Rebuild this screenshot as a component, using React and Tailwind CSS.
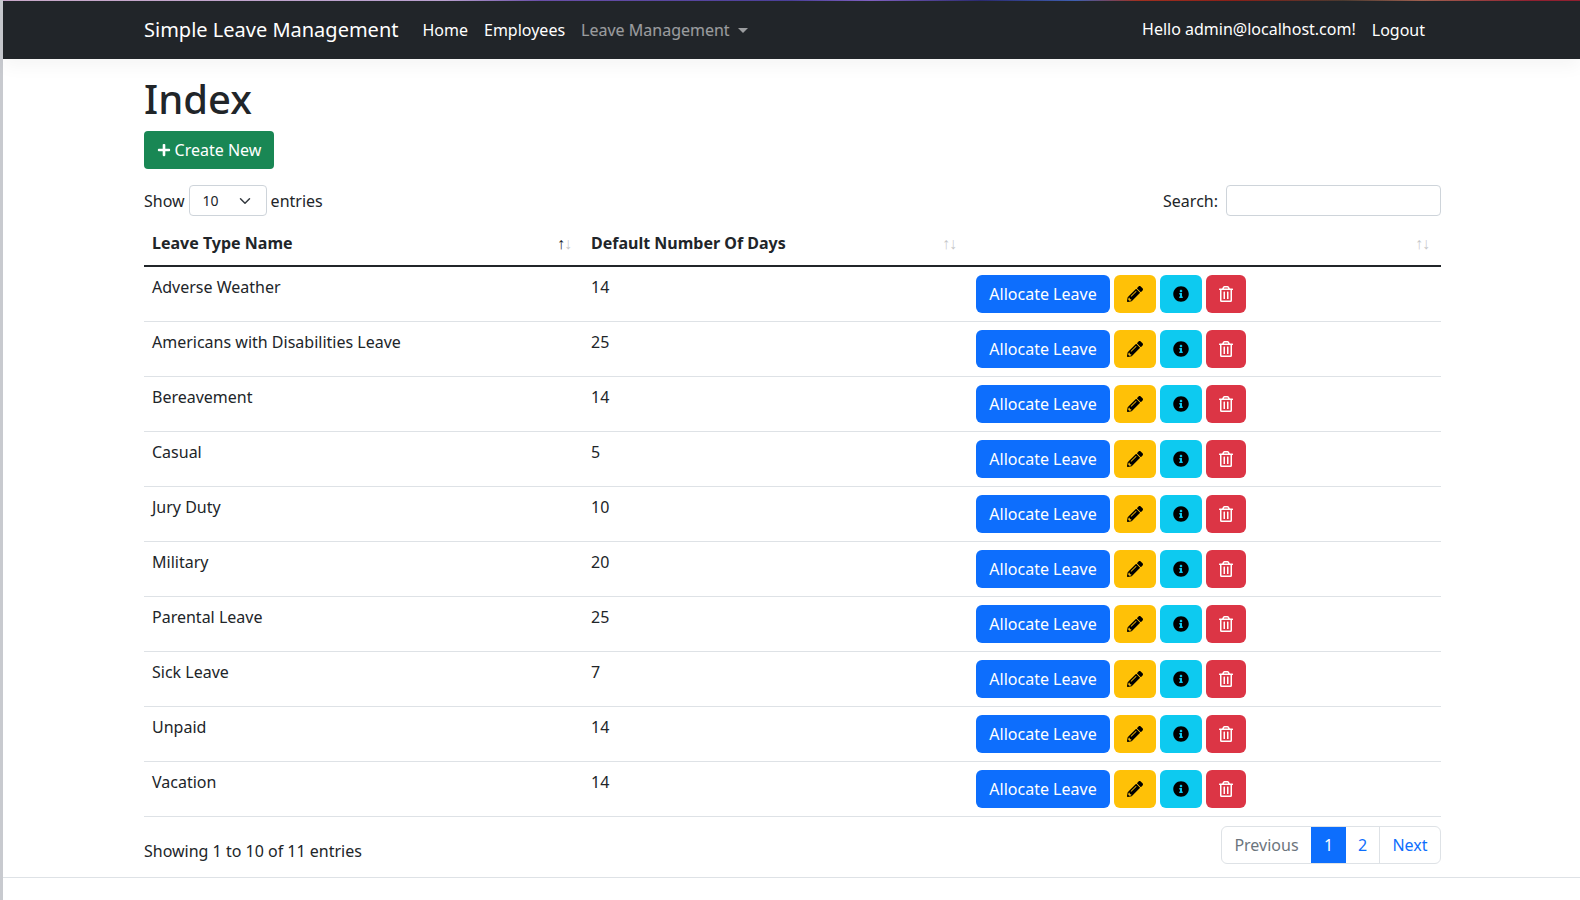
import React from 'react'
import { FaPencilAlt, FaInfoCircle, FaRegTrashAlt, FaPlus } from 'react-icons/fa'

const leaveTypes = [
  ['Adverse Weather', 14],
  ['Americans with Disabilities Leave', 25],
  ['Bereavement', 14],
  ['Casual', 5],
  ['Jury Duty', 10],
  ['Military', 20],
  ['Parental Leave', 25],
  ['Sick Leave', 7],
  ['Unpaid', 14],
  ['Vacation', 14],
]

const SortArrows = ({ active }) => (
  <span className="flex font-normal text-[#212529] text-[16px] leading-6 tracking-[-1px]">
    <span className={active ? 'opacity-100' : 'opacity-25'}>↑</span>
    <span className="opacity-25">↓</span>
  </span>
)

const ActionButtons = () => (
  <div className="flex gap-1">
    <button className="h-[38px] w-[134px] rounded-md bg-[#0d6efd] text-white">Allocate Leave</button>
    <button className="flex h-[38px] w-[42px] items-center justify-center rounded-md bg-[#ffc107] text-black">
      <FaPencilAlt className="h-4 w-4" />
    </button>
    <button className="flex h-[38px] w-[42px] items-center justify-center rounded-md bg-[#0dcaf0] text-black">
      <FaInfoCircle className="h-4 w-4" />
    </button>
    <button className="flex h-[38px] w-10 items-center justify-center rounded-md bg-[#dc3545] text-white">
      <FaRegTrashAlt className="h-4 w-[14px]" />
    </button>
  </div>
)

export default function App() {
  return (
    <div className="flex h-[900px] overflow-hidden bg-white font-['Noto_Sans',sans-serif] text-base text-[#212529]">
      <div className="w-[3px] shrink-0 bg-[#c8cacf]" />
      <div className="flex min-w-0 flex-1 flex-col">
        <header className="shadow-[0_8px_16px_rgba(0,0,0,0.04)]">
          <div className="h-px bg-[linear-gradient(90deg,#c9a9c9_0%,#b9a0cf_28%,#6a4fa8_34%,#4a3f98_50%,#8060c0_55%,#2a2a70_62%,#3f5fb0_68%,#a03020_72%,#8a2018_78%,#4a3a30_85%,#a06050_90%,#902030_97%)]" />
          <nav className="flex h-[58px] items-center bg-[#212529] pl-[141px] pr-[147px] text-white">
            <span className="mr-4 text-xl">Simple Leave Management</span>
            <div className="flex flex-1 items-center">
              <a className="px-2">Home</a>
              <a className="px-2">Employees</a>
              <a className="flex items-center px-2 text-white/55">
                Leave Management
                <span className="ml-2 border-x-[5px] border-t-[5px] border-x-transparent border-t-white/55" />
              </a>
            </div>
            <span className="mb-0.5 mr-2">Hello admin@localhost.com!</span>
            <a className="px-2">Logout</a>
          </nav>
        </header>

        <main className="ml-[141px] mr-[139px] flex-1">
          <h1 className="mt-4 text-[40px] font-medium leading-[48px]">Index</h1>
          <button className="mt-2 flex h-[38px] w-[130px] items-center justify-center rounded-[4px] bg-[#198754] text-white">
            <FaPlus className="mr-1 h-[14px] w-[14px]" />
            Create New
          </button>

          <div className="mt-4 flex items-center justify-between">
            <div className="flex items-center">
              <span>Show</span>
              <div className="mx-1 flex h-[31px] w-[78px] items-center justify-between rounded-[4px] border border-[#ced4da] pl-[13px] pr-[15px] text-sm">
                <span>10</span>
                <svg width="12" height="12" viewBox="0 0 16 16" fill="none" stroke="#343a40" strokeWidth="2" strokeLinecap="round" strokeLinejoin="round">
                  <path d="M2 5l6 6 6-6" />
                </svg>
              </div>
              <span>entries</span>
            </div>
            <div className="flex items-center">
              <span className="mr-2">Search:</span>
              <input className="h-[31px] w-[215px] rounded-[4px] border border-[#ced4da]" />
            </div>
          </div>

          <table className="mt-1 w-full table-fixed border-collapse">
            <colgroup>
              <col className="w-[439px]" />
              <col className="w-[385px]" />
              <col />
            </colgroup>
            <thead>
              <tr className="border-b-2 border-[#212529] text-left font-bold">
                <th className="h-[46px] p-0 pl-2 pr-3">
                  <div className="flex items-center justify-between">Leave Type Name<SortArrows active /></div>
                </th>
                <th className="h-[46px] p-0 pl-2 pr-3">
                  <div className="flex items-center justify-between">Default Number Of Days<SortArrows /></div>
                </th>
                <th className="h-[46px] p-0 pl-2 pr-3">
                  <div className="flex items-center justify-end"><SortArrows /></div>
                </th>
              </tr>
            </thead>
            <tbody>
              {leaveTypes.map(([name, days]) => (
                <tr key={name} className="border-b border-[#dee2e6]">
                  <td className="p-2 align-top">{name}</td>
                  <td className="p-2 align-top">{days}</td>
                  <td className="p-2 align-top"><ActionButtons /></td>
                </tr>
              ))}
            </tbody>
          </table>

          <div className="mt-[9px] flex items-start justify-between">
            <span className="pt-[13px]">Showing 1 to 10 of 11 entries</span>
            <div className="flex h-[38px] items-stretch rounded-md border border-[#dee2e6]">
              <a className="flex w-[89px] items-center justify-center text-[#6c757d]">Previous</a>
              <a className="flex w-[35px] items-center justify-center bg-[#0d6efd] text-white">1</a>
              <a className="flex w-[34px] items-center justify-center border-r border-[#dee2e6] text-[#0d6efd]">2</a>
              <a className="flex w-[60px] items-center justify-center text-[#0d6efd]">Next</a>
            </div>
          </div>
        </main>

        <div className="h-[23px] border-t border-[#dee2e6]" />
      </div>
    </div>
  )
}
